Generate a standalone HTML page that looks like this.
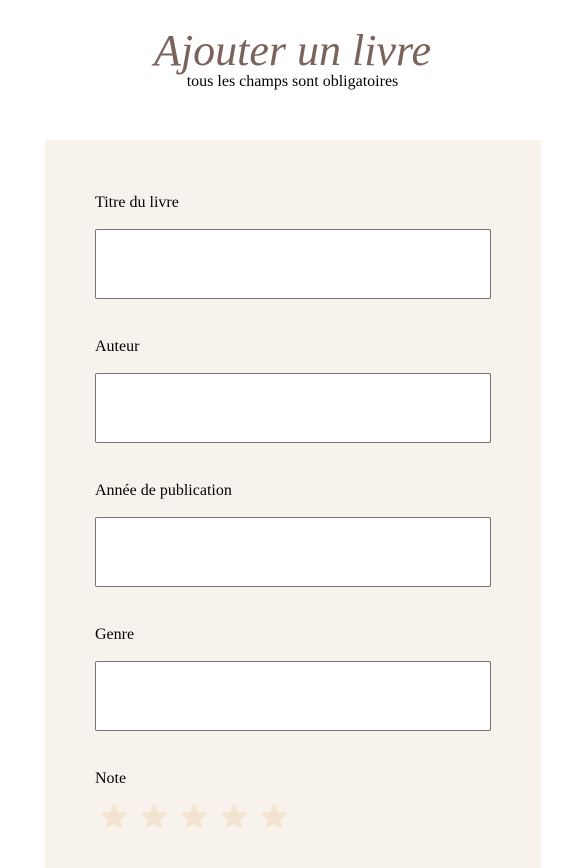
<!DOCTYPE html>
<html><head><meta charset="utf-8"><style>
body{margin:0;background:#fff;font-family:"Liberation Serif",serif;width:585px;height:868px;overflow:hidden;position:relative}
h1{position:absolute;left:0;width:585px;top:25px;margin:0;text-align:center;font-style:italic;font-weight:normal;font-size:44px;line-height:52px;color:#7b625a}
.sub{position:absolute;left:0;width:585px;top:73px;text-align:center;font-size:16px;line-height:18px;color:#000}
.panel{position:absolute;left:45px;top:140px;width:496px;height:728px;background:#f7f2ec}
.lab{position:absolute;left:50px;font-size:16px;line-height:18px;color:#000}
.inp{position:absolute;left:50px;width:394px;height:68px;background:#fff;border:1px solid #767676;border-radius:2px}
svg{position:absolute}
</style></head><body>
<h1>Ajouter un livre</h1>
<div class="sub">tous les champs sont obligatoires</div>
<div class="panel">
<div class="lab" style="top:54px">Titre du livre</div><div class="inp" style="top:89px"></div>
<div class="lab" style="top:198px">Auteur</div><div class="inp" style="top:233px"></div>
<div class="lab" style="top:342px">Année de publication</div><div class="inp" style="top:377px"></div>
<div class="lab" style="top:486px">Genre</div><div class="inp" style="top:521px"></div>
<div class="lab" style="top:630px">Note</div>
<svg style="left:56px;top:664px" width="190" height="26" viewBox="0 0 190 26">
<defs><path id="s" d="M13 1.5l3.4 7.3 7.9.9-5.9 5.4 1.6 7.8L13 19l-7 3.9 1.6-7.8L1.7 9.7l7.9-.9z" fill="#f2e4d0" stroke="#f2e4d0" stroke-width="2" stroke-linejoin="round"/></defs>
<use href="#s" x="0"/><use href="#s" x="40"/><use href="#s" x="80"/><use href="#s" x="120"/><use href="#s" x="160"/>
</svg>
</div>
</body></html>
